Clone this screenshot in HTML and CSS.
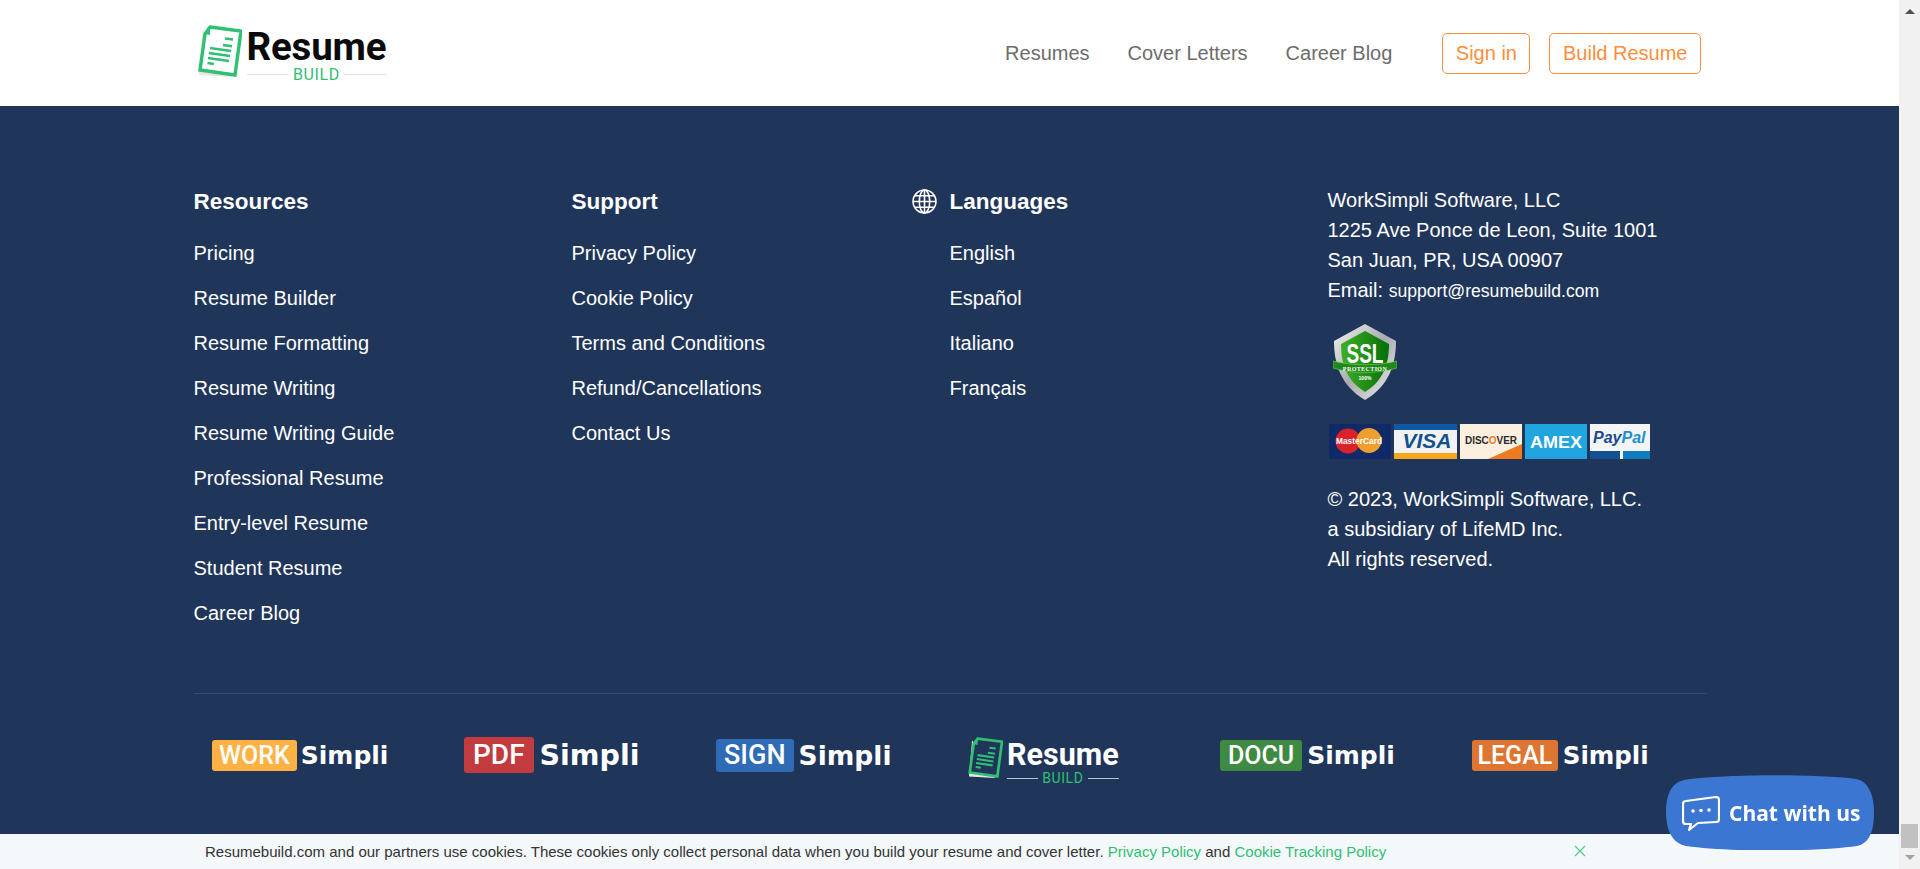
FILE: index.html
```html
<!DOCTYPE html>
<html lang="en">
<head>
  <meta charset="UTF-8">
  <meta name="viewport" content="width=device-width, initial-scale=1.0">
  <title>Resume Build</title>
  <link rel="stylesheet" href="styles.css">
</head>
<body>
  <svg class="defs" width="0" height="0">
    <symbol id="docIcon" viewBox="0 0 44 52">
      <path class="doc-back" d="M5 4 L1 50 L34 52 Z"/>
      <path class="doc-page" d="M12 2 L43 6 L37 50 L2 45 L7 9 Z" stroke="#2fc073" stroke-width="3.400"/>
      <path d="M12 2 L7 9 L12 10 Z" fill="#2fc073"/>
      <path d="M27 13.500 L35 14.500 M25 20 L34 21.200 M12 23 L33 26 M11 28 L32 31 M10 33 L31 36 M9.500 38 L16 39" stroke="#2fc073" stroke-width="2.600" fill="none"/>
    </symbol>
  </svg>

  <div class="page">
    <header class="topbar">
      <div class="container topbar-inner">
        <a class="logo" href="#">
          <svg class="logo-icon"><use href="#docIcon"/></svg>
          <span class="logo-text">
            <span class="logo-word">Resume</span>
            <span class="logo-sub">BUILD</span>
          </span>
        </a>
        <nav class="nav">
          <a href="#">Resumes</a>
          <a href="#">Cover Letters</a>
          <a href="#">Career Blog</a>
          <a class="btn btn-signin" href="#">Sign in</a>
          <a class="btn" href="#">Build Resume</a>
        </nav>
      </div>
    </header>

    <footer class="footer">
      <div class="container">
        <div class="columns">
          <div class="col">
            <h4>Resources</h4>
            <a href="#">Pricing</a>
            <a href="#">Resume Builder</a>
            <a href="#">Resume Formatting</a>
            <a href="#">Resume Writing</a>
            <a href="#">Resume Writing Guide</a>
            <a href="#">Professional Resume</a>
            <a href="#">Entry-level Resume</a>
            <a href="#">Student Resume</a>
            <a href="#">Career Blog</a>
          </div>
          <div class="col">
            <h4>Support</h4>
            <a href="#">Privacy Policy</a>
            <a href="#">Cookie Policy</a>
            <a href="#">Terms and Conditions</a>
            <a href="#">Refund/Cancellations</a>
            <a href="#">Contact Us</a>
          </div>
          <div class="col col-lang">
            <svg class="globe" viewBox="0 0 24 24" fill="none" stroke="#fff" stroke-width="1.500">
              <circle cx="12" cy="12" r="11"/>
              <ellipse cx="12" cy="12" rx="5" ry="11"/>
              <path d="M12 1 V23 M1 12 H23 M2.600 6.500 H21.400 M2.600 17.500 H21.400"/>
            </svg>
            <h4>Languages</h4>
            <a href="#">English</a>
            <a href="#">Español</a>
            <a href="#">Italiano</a>
            <a href="#">Français</a>
          </div>
          <div class="col-info">
            <p>WorkSimpli Software, LLC<br>1225 Ave Ponce de Leon, Suite 1001<br>San Juan, PR, USA 00907<br>Email: <a class="mail" href="#">support@resumebuild.com</a></p>

            <svg class="ssl" viewBox="0 0 64 76">
              <defs>
                <linearGradient id="steel" x1="0" y1="0" x2="1" y2="1">
                  <stop offset="0" stop-color="#f4f4f4"/>
                  <stop offset="0.5" stop-color="#a9adb0"/>
                  <stop offset="1" stop-color="#eeeeee"/>
                </linearGradient>
                <linearGradient id="green" x1="0" y1="0" x2="1" y2="0">
                  <stop offset="0" stop-color="#3fb024"/>
                  <stop offset="1" stop-color="#056f0c"/>
                </linearGradient>
              </defs>
              <path d="M32 0 L63 17 C63 40 56 62 32 76 C8 62 1 40 1 17 Z" fill="url(#steel)"/>
              <path d="M32 7 L56 20 C56 40 50 57 32 68 C14 57 8 40 8 20 Z" fill="url(#green)"/>
              <text class="ssl-big" x="32" y="39" text-anchor="middle" textLength="37" lengthAdjust="spacingAndGlyphs">SSL</text>
              <path d="M0 37 C20 42 44 42 64 37 L64 44 C44 50 20 50 0 44 Z" fill="#1f8a1a" stroke="#7fd060" stroke-width="0.600"/>
              <text class="ssl-small" x="32" y="46.500" text-anchor="middle">PROTECTION</text>
              <text class="ssl-tiny" x="32" y="56" text-anchor="middle">100%</text>
            </svg>

            <div class="cards">
              <svg class="card" viewBox="0 0 62 35">
                <rect width="62" height="35" fill="#0f2a66"/>
                <circle cx="19" cy="17" r="12.500" fill="#d9222a"/>
                <circle cx="40" cy="16.500" r="12.500" fill="#ee9f2d"/>
                <text class="card-mc" x="30" y="20" text-anchor="middle" textLength="46" lengthAdjust="spacingAndGlyphs">MasterCard</text>
              </svg>
              <svg class="card" viewBox="0 0 63 35">
                <rect width="63" height="35" fill="#f2f2f2"/>
                <rect width="63" height="6" fill="#0f5aa5"/>
                <rect y="29" width="63" height="6" fill="#f5a81c"/>
                <text class="card-visa" x="33" y="24" text-anchor="middle">VISA</text>
              </svg>
              <svg class="card" viewBox="0 0 62 35">
                <rect width="62" height="35" fill="#fbf0df"/>
                <path d="M28 35 L62 20 V35 Z" fill="#ee7a22"/>
                <text class="card-disc" x="31" y="20" text-anchor="middle" textLength="52" lengthAdjust="spacingAndGlyphs">DISC<tspan fill="#ee7a22">O</tspan>VER</text>
              </svg>
              <svg class="card" viewBox="0 0 62 35">
                <rect width="62" height="35" fill="#21a5df"/>
                <text class="card-amex" x="31" y="24" text-anchor="middle" textLength="52" lengthAdjust="spacingAndGlyphs">AMEX</text>
              </svg>
              <svg class="card" viewBox="0 0 60 35">
                <rect width="60" height="35" fill="#f3f4f6"/>
                <rect y="27" width="30" height="8" fill="#12508f"/>
                <rect x="33" y="27" width="27" height="8" fill="#0f7cc0"/>
                <text class="card-pp" x="3" y="19"><tspan fill="#1d4a8c">Pay</tspan><tspan fill="#1f8fd0">Pal</tspan></text>
              </svg>
            </div>

            <p>© 2023, WorkSimpli Software, LLC.<br>a subsidiary of LifeMD Inc.<br>All rights reserved.</p>
          </div>
        </div>

        <div class="brands">
          <a class="brand brand-work" href="#"><b>WORK</b><span>Simpli</span></a>
          <a class="brand brand-pdf" href="#"><b>PDF</b><span>Simpli</span></a>
          <a class="brand brand-sign" href="#"><b>SIGN</b><span>Simpli</span></a>
          <a class="brand-resume" href="#">
            <svg class="brand-icon"><use href="#docIcon"/></svg>
            <span class="logo-text">
              <span class="brand-word">Resume</span>
              <span class="logo-sub brand-sub">BUILD</span>
            </span>
          </a>
          <a class="brand brand-docu" href="#"><b>DOCU</b><span>Simpli</span></a>
          <a class="brand brand-legal" href="#"><b>LEGAL</b><span>Simpli</span></a>
        </div>
      </div>
    </footer>
  </div>

  <div class="scrollbar">
    <span class="arrow arrow-up"></span>
    <span class="thumb"></span>
    <span class="arrow arrow-down"></span>
  </div>

  <div class="cookies">
    <p>Resumebuild.com and our partners use cookies. These cookies only collect personal data when you build your resume and cover letter. <a href="#">Privacy Policy</a> and <a href="#">Cookie Tracking Policy</a></p>
    <svg class="close" viewBox="0 0 12 12" fill="none" stroke="#4cc98a" stroke-width="1.100"><path d="M1 1 L11 11 M11 1 L1 11"/></svg>
  </div>

  <a class="chat" href="#">
    <svg class="chat-bg" viewBox="0 0 208 75"><path d="M18 5 C60 -1 150 -1 190 4 C202 6 208 20 208 37 C208 55 204 68 191 71 C150 77 60 77 20 71 C6 68 0 55 0 37 C0 20 5 8 18 5 Z" fill="#3b76d2"/></svg>
    <svg class="chat-icon" viewBox="0 0 38 35" fill="none" stroke="#fff" stroke-width="2.200" stroke-linejoin="round">
      <path d="M4 5 L34 1 Q37 1 37 4 V23 Q37 26 34 26 L16 27 L7 34 L9 28 L4 28 Q1 28 1 25 V8 Q1 5 4 5 Z"/>
      <circle cx="11" cy="15" r="1.800" fill="#fff" stroke="none"/>
      <circle cx="19" cy="14.500" r="1.800" fill="#fff" stroke="none"/>
      <circle cx="27" cy="14" r="1.800" fill="#fff" stroke="none"/>
    </svg>
    <span>Chat with us</span>
  </a>
</body>
</html>
```

FILE: styles.css
```css
* { box-sizing: border-box; }
html, body { height: 100%; }
body { margin: 0; overflow: hidden; font-family: "Liberation Sans", Arial, sans-serif; font-size: 20px; background: #20355a; }
a { text-decoration: none; color: inherit; }
.defs { position: absolute; }

.page { width: 1899px; height: 869px; overflow: hidden; }
.container { width: 1513px; margin: 0 0 0 193.500px; }

/* header */
.topbar { height: 106px; background: #fff; }
.topbar-inner { height: 100%; display: flex; justify-content: space-between; align-items: center; padding-right: 5.500px; }
.logo { display: flex; align-items: flex-start; margin: 1px 0 0 4px; }
.logo-icon { width: 44px; height: 52px; margin-right: 5px; }
.logo-text { display: flex; flex-direction: column; }
.logo .logo-text { padding-top: 4px; }
.logo-word { font-family: Roboto, sans-serif; font-weight: 700; font-size: 38.500px; line-height: 36px; color: #0a0a0a; letter-spacing: -0.2px; }
.logo-sub { display: flex; align-items: center; gap: 4px; font-family: Roboto, sans-serif; font-size: 16px; line-height: 16px; color: #2fc073; letter-spacing: 0.6px; margin-top: 2px; }
.logo-sub::before, .logo-sub::after { content: ""; flex: 1; height: 1px; background: #e2e2e2; }
.nav { display: flex; align-items: center; color: #6c6c6c; }
.nav > a { margin-left: 38px; }
.nav > a.btn { color: #ff8e3c; border: 1px solid #ff8e3c; border-radius: 5px; height: 41px; line-height: 39px; padding: 0 12.500px; margin-left: 19px; }
.nav > a.btn-signin { margin-left: 50px; }

/* footer */
.footer { height: 763px; background: #20355a; color: #fff; padding-top: 82px; }
.columns { display: grid; grid-template-columns: 378px 341px 415px 1fr; height: 506px; border-bottom: 1px solid #3b4d6e; }
.col h4 { margin: 0 0 25px; padding-top: 1px; font-size: 22.500px; line-height: 26px; font-weight: 700; }
.col a { display: block; height: 45px; line-height: 26px; }
.col-lang { position: relative; padding-left: 37px; }
.globe { position: absolute; left: -1px; top: 1px; width: 25px; height: 25px; }
.col-info { margin-top: -3px; }
.col-info p { margin: 0; line-height: 30px; }
.mail { font-size: 17.600px; }
.ssl { display: block; width: 64px; height: 76px; margin: 18px 0 24px 5px; }
.ssl-big { font: 700 28px "Liberation Sans", sans-serif; fill: #fff; }
.ssl-small { font: 700 6px "Liberation Serif", serif; fill: #fff; letter-spacing: 0.4px; }
.ssl-tiny { font: 700 5px "Liberation Sans", sans-serif; fill: #fff; }
.cards { display: flex; gap: 3px; margin: 0 0 25px 1px; }
.card { height: 35px; }
.card:nth-child(1) { width: 62px; }
.card:nth-child(2) { width: 63px; }
.card:nth-child(3) { width: 62px; }
.card:nth-child(4) { width: 62px; }
.card:nth-child(5) { width: 60px; }
.card-mc { font: 700 9.500px "Liberation Sans", sans-serif; fill: #fff; }
.card-visa { font: italic 700 21px "Liberation Sans", sans-serif; fill: #12508f; }
.card-disc { font: 700 11px "Liberation Sans", sans-serif; fill: #2a2a2a; }
.card-amex { font: 700 17px "Liberation Sans", sans-serif; fill: #fff; }
.card-pp { font: italic 700 16px "Liberation Sans", sans-serif; }

/* the doc icon is used on white and on navy */
.doc-back { fill: #e6e6e6; }
.doc-page { fill: var(--doc-fill, #fff); }

/* product logos */
.brands { display: grid; grid-template-columns: repeat(6, 252px); padding: 43px 0 0 18.500px; }
.brand { display: flex; align-items: center; height: 36px; }
.brand b { display: block; padding: 0 7px; border-radius: 3px; font-family: Roboto, sans-serif; font-weight: 500; font-size: 25px; line-height: 31px; }
.brand span { margin-left: 5px; font-family: "DejaVu Sans", sans-serif; font-weight: 700; font-size: 25px; }
.brand-work b { background: #ffb244; }
.brand-work span { margin-left: 4px; }
.brand-pdf b { background: #c23c3f; line-height: 36px; padding: 0 9px; font-size: 28px; }
.brand-pdf span { font-size: 28.500px; margin-left: 6px; }
.brand-sign b { background: #2f6cb5; line-height: 33px; padding: 0 8px; font-size: 27px; }
.brand-sign span { font-size: 26.500px; }
.brand-docu b { background: #3e8a42; padding: 0 8px; }
.brand-legal b { background: #dd7632; padding: 0 5.500px; }
.brand-legal span { font-size: 24.500px; margin-left: 5px; }
.brand-resume { display: flex; align-items: flex-start; --doc-fill: #20355a; }
.brand-icon { width: 35px; height: 41px; margin-right: 4px; }
.brand-resume .logo-text { padding-top: 2px; }
.brand-word { font-family: Roboto, sans-serif; font-weight: 700; font-size: 30.500px; line-height: 31px; }
.brand-sub { font-size: 14px; line-height: 14px; margin-top: 1px; }
.brand-sub::before, .brand-sub::after { background: #b8c0cc; }

/* browser scrollbar */
.scrollbar { position: fixed; top: 0; right: 0; bottom: 0; width: 21px; background: #f1f1f1; }
.thumb { position: absolute; left: 2px; width: 17px; top: 824px; height: 24px; background: #c1c1c1; }
.arrow { position: absolute; left: 6px; width: 0; height: 0; border-left: 5px solid transparent; border-right: 5px solid transparent; }
.arrow-up { top: 9px; border-bottom: 5px solid #505050; }
.arrow-down { bottom: 9px; border-top: 5px solid #a3a3a3; }

/* cookie notice and chat */
.cookies { position: fixed; left: 0; bottom: 0; width: 1899px; height: 35px; background: #f4f8fb; color: #333; font-size: 15px; display: flex; align-items: center; }
.cookies p { margin: 0 0 0 205px; }
.cookies a { color: #2fc073; }
.close { position: absolute; left: 1574px; top: 11px; width: 12px; height: 12px; }
.chat { position: fixed; left: 1666px; top: 775px; width: 208px; height: 75px; display: flex; align-items: center; color: #fff; font-family: "Open Sans", sans-serif; font-weight: 700; font-size: 21px; padding: 0 0 0 16px; }
.chat-bg { position: absolute; inset: 0; width: 208px; height: 75px; }
.chat-icon { position: relative; width: 38px; height: 35px; margin: 2px 9px 0 0; }
.chat span { position: relative; }
```
